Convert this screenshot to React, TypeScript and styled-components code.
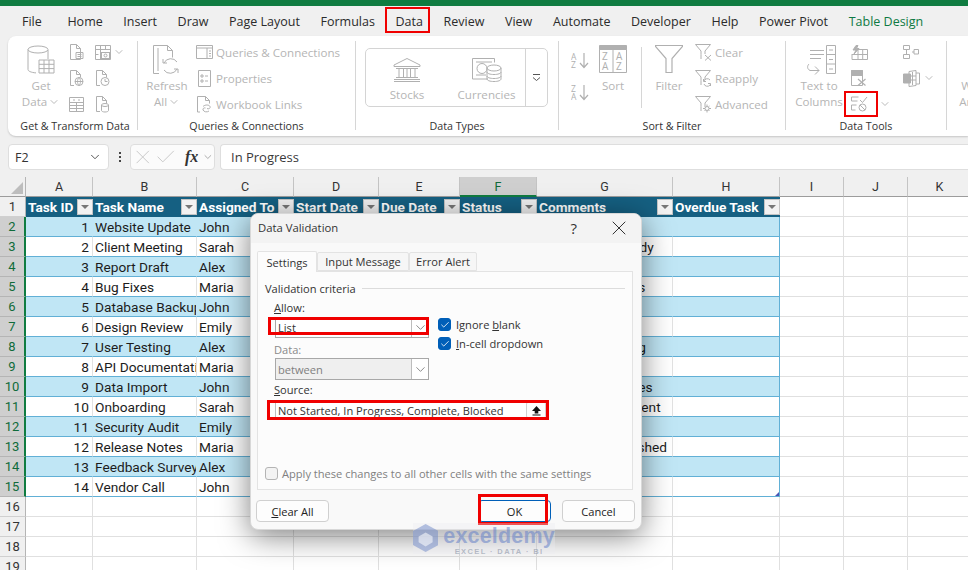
import React from 'react';
import styled, { createGlobalStyle } from 'styled-components';
import { ChevronDown, X, Check } from 'lucide-react';

const GlobalStyle = createGlobalStyle`
  html, body {
    margin: 0;
    padding: 0;
    overflow: hidden;
    background: #f0f0f0;
  }
`;

const uiFont = `"Open Sans", "Noto Sans", sans-serif`;
const cellFont = `Roboto, "Liberation Sans", sans-serif`;

const Page = styled.div`
  position: relative;
  width: 968px;
  height: 570px;
  overflow: hidden;
  display: flex;
  flex-direction: column;
  background: #f0f0f0;
  font-family: ${uiFont};
`;

const TopStrip = styled.div`
  height: 6px;
  flex-shrink: 0;
  background: #107c41;
`;

const TabBar = styled.div`
  height: 30px;
  flex-shrink: 0;
  display: flex;
  align-items: center;
  gap: 20.6px;
  padding-left: 22px;
`;

const Tab = styled.div<{ $accent?: boolean }>`
  position: relative;
  font-size: 12.5px;
  color: ${(p) => (p.$accent ? '#0e7a43' : '#2b2b2b')};
  white-space: nowrap;

  &:first-child {
    margin-right: 5px;
  }
`;

const RedBox = styled.div<{ $t: number; $l: number; $r: number; $b: number; $w?: number }>`
  position: absolute;
  top: ${(p) => p.$t}px;
  left: ${(p) => p.$l}px;
  right: ${(p) => p.$r}px;
  bottom: ${(p) => p.$b}px;
  border: ${(p) => p.$w || 2}px solid #f00000;
  pointer-events: none;
  z-index: 3;
`;

const Ribbon = styled.div`
  height: 100px;
  flex-shrink: 0;
  margin-left: 8px;
  display: flex;
  background: #fff;
  border-radius: 8px 0 0 8px;
  box-shadow: 0 1px 2px rgba(0, 0, 0, 0.18);
  overflow: hidden;
`;

const Group = styled.div<{ $w: number }>`
  width: ${(p) => p.$w}px;
  flex-shrink: 0;
  display: flex;
  flex-direction: column;
`;

const GroupBody = styled.div<{ $pl: number }>`
  height: 82px;
  padding: 3px 0 0 ${(p) => p.$pl}px;
  display: flex;
  box-sizing: border-box;
`;

const GroupLabel = styled.div<{ $pl?: number }>`
  height: 16px;
  padding-left: ${(p) => p.$pl || 0}px;
  line-height: 16px;
  text-align: center;
  font-size: 10.7px;
  color: #333;
  white-space: nowrap;
`;

const GroupSep = styled.div`
  width: 1px;
  flex-shrink: 0;
  margin: 5px 0 6px;
  background: #d6d6d6;
`;

const BigButton = styled.div<{ $w: number; $ml?: number }>`
  width: ${(p) => p.$w}px;
  margin-left: ${(p) => p.$ml || 0}px;
  flex-shrink: 0;
  display: flex;
  flex-direction: column;
  align-items: center;
  font-size: 11.6px;
  line-height: 16px;
  color: #b5b5b5;
  white-space: nowrap;
`;

const IconSpot = styled.div`
  height: 39px;
  box-sizing: border-box;
  padding-top: 6px;
  display: flex;
  align-items: flex-start;
`;

const CaretLine = styled.span`
  display: flex;
  align-items: center;
  gap: 1px;
`;

const Stack = styled.div<{ $ml?: number }>`
  margin-left: ${(p) => p.$ml || 0}px;
  display: flex;
  flex-direction: column;
`;

const Line = styled.div<{ $w?: number }>`
  position: relative;
  height: 26px;
  width: ${(p) => (p.$w ? `${p.$w}px` : 'auto')};
  display: flex;
  align-items: center;
  gap: 3px;
  font-size: 11.6px;
  color: #b5b5b5;
  white-space: nowrap;
`;

const Slot = styled.div`
  width: 17px;
  display: flex;
  justify-content: center;
  flex-shrink: 0;
`;

const Caret = styled(ChevronDown)<{ $ml?: number }>`
  width: 12px;
  height: 12px;
  margin-left: ${(p) => p.$ml || 0}px;
  color: #a8a8a8;
  stroke-width: 1.6;
  flex-shrink: 0;
`;

const IconGrid = styled.div`
  margin-left: 9px;
  display: grid;
  grid-template-columns: 26px 28px;
  grid-auto-rows: 26px;
  align-items: center;
`;

const IconCell = styled.div`
  display: flex;
  align-items: center;
  gap: 2px;
`;

const TypeBox = styled.div`
  margin-top: 9px;
  width: 183px;
  height: 59px;
  box-sizing: border-box;
  border: 1px solid #d4d4d4;
  border-radius: 5px;
  display: flex;
`;

const TypeItem = styled.div<{ $w: number }>`
  width: ${(p) => p.$w}px;
  padding-top: 9px;
  display: flex;
  flex-direction: column;
  align-items: center;
  gap: 5px;
  font-size: 11.6px;
  color: #b5b5b5;
`;

const TypeMore = styled.div`
  flex: 1;
  border-left: 1px solid #d4d4d4;
  display: flex;
  align-items: center;
  justify-content: center;
`;

const SortStack = styled.div`
  margin-left: 12px;
  padding-top: 13px;
  display: flex;
  flex-direction: column;
  gap: 15px;
`;

const InnerSep = styled.div`
  width: 1px;
  height: 61px;
  margin: 8px 0 0 14px;
  background: #d6d6d6;
`;

const FormulaRow = styled.div`
  height: 26px;
  flex-shrink: 0;
  margin-top: 8px;
  display: flex;
  align-items: stretch;
`;

const NameBox = styled.div`
  width: 101px;
  margin-left: 8px;
  box-sizing: border-box;
  padding: 0 6px;
  display: flex;
  align-items: center;
  justify-content: space-between;
  background: #fff;
  border: 1px solid #dedede;
  border-radius: 4px;
  font-size: 12.5px;
  color: #333;
`;

const Dots = styled.div`
  width: 21px;
  display: flex;
  flex-direction: column;
  align-items: center;
  justify-content: center;
  gap: 2px;

  i {
    width: 2px;
    height: 2px;
    background: #444;
  }
`;

const FormulaTools = styled.div`
  width: 85px;
  box-sizing: border-box;
  display: flex;
  align-items: center;
  background: #fbfbfb;
  border: 1px solid #dedede;
  border-radius: 4px;
  color: #c8c8c8;
`;

const FxMark = styled.span`
  margin: 0 4px 0 7px;
  font-family: "Liberation Serif", serif;
  font-style: italic;
  font-weight: 700;
  font-size: 16px;
  color: #333;
`;

const FormulaInput = styled.div`
  flex: 1;
  margin-left: 5px;
  padding-left: 10px;
  display: flex;
  align-items: center;
  background: #fff;
  border: 1px solid #dedede;
  border-right: none;
  border-radius: 4px 0 0 4px;
  font-size: 13px;
  color: #3a3a3a;
`;

const SheetGrid = styled.div`
  margin-top: 7px;
  display: grid;
  grid-template-columns: 26px 67px 104px 97px 85px 81px 77px 136px 107px 64px 64px 64px;
  grid-auto-rows: 20px;
  background: #fff;
`;

const Corner = styled.div`
  background: #f0f0f0;
  border-right: 1px solid #b5b5b5;
  border-bottom: 1px solid #9c9c9c;
  display: flex;
  align-items: flex-end;
  justify-content: flex-end;
  padding: 0 2px 2px 0;
  box-sizing: border-box;

  &::after {
    content: '';
    border-style: solid;
    border-width: 0 0 12px 12px;
    border-color: transparent transparent #bdbdbd transparent;
  }
`;

const ColHead = styled.div<{ $on?: boolean }>`
  box-sizing: border-box;
  display: flex;
  align-items: center;
  justify-content: center;
  background: ${(p) => (p.$on ? '#cfcfcf' : '#f0f0f0')};
  border-right: 1px solid #c4c4c4;
  border-bottom: ${(p) => (p.$on ? '2px solid #107c41' : '1px solid #9c9c9c')};
  font-family: ${cellFont};
  font-size: 12.5px;
  color: ${(p) => (p.$on ? '#0f6b3a' : '#333')};
`;

const RowHead = styled.div<{ $on?: boolean }>`
  box-sizing: border-box;
  display: flex;
  align-items: center;
  justify-content: center;
  background: ${(p) => (p.$on ? '#cfcfcf' : '#f0f0f0')};
  border-right: ${(p) => (p.$on ? '2px solid #107c41' : '1px solid #b5b5b5')};
  border-bottom: 1px solid ${(p) => (p.$on ? '#b5b5b5' : '#d0d0d0')};
  font-family: ${cellFont};
  font-size: 13px;
  color: ${(p) => (p.$on ? '#0f6b3a' : '#333')};
`;

const HeadCell = styled.div`
  position: relative;
  box-sizing: border-box;
  padding-left: 2px;
  display: flex;
  align-items: center;
  background: #156082;
  font-family: ${cellFont};
  font-weight: 700;
  font-size: 13.7px;
  color: #fff;
  white-space: nowrap;
  overflow: hidden;
`;

const FilterButton = styled.div`
  position: absolute;
  right: 0;
  top: 2px;
  width: 16px;
  height: 16px;
  box-sizing: border-box;
  display: flex;
  align-items: center;
  justify-content: center;
  background: #f2f2f2;
  border: 1px solid #c4c4c4;

  &::after {
    content: '';
    border-style: solid;
    border-width: 4px 4px 0 4px;
    border-color: #777 transparent transparent transparent;
  }
`;

const Cell = styled.div<{ $band?: boolean; $num?: boolean; $end?: boolean }>`
  position: relative;
  box-sizing: border-box;
  padding: 0 3px 0 2px;
  line-height: 21px;
  background: ${(p) => (p.$band ? '#c0e6f5' : '#fff')};
  border-bottom: 1px solid #61b0d6;
  border-right: 1px solid ${(p) => (p.$end ? '#61b0d6' : p.$band ? '#c0e6f5' : '#e2e2e2')};
  font-family: ${cellFont};
  font-size: 13.7px;
  color: #1c1c1c;
  text-align: ${(p) => (p.$num ? 'right' : 'left')};
  white-space: nowrap;
  overflow: hidden;
`;

const Blank = styled.div`
  box-sizing: border-box;
  background: #fff;
  border-right: 1px solid #e0e0e0;
  border-bottom: 1px solid #e0e0e0;
`;

const ResizeMark = styled.div`
  position: absolute;
  right: 0;
  bottom: 0;
  border-style: solid;
  border-width: 0 0 4px 4px;
  border-color: transparent transparent #4a55b5 transparent;
`;

const Dialog = styled.div`
  position: absolute;
  left: 250px;
  top: 213px;
  width: 392px;
  height: 317px;
  box-sizing: border-box;
  display: flex;
  flex-direction: column;
  background: #f9f9f9;
  border: 1px solid #d8d8d8;
  border-radius: 8px;
  box-shadow: 0 6px 30px rgba(0, 0, 0, 0.5);
  font-size: 11.1px;
  color: #333;
  z-index: 2;
`;

const DialogTitle = styled.div`
  height: 29px;
  flex-shrink: 0;
  box-sizing: border-box;
  padding: 0 10px 2px 7px;
  display: flex;
  align-items: center;
  background: #f3f3f3;
  border-radius: 8px 8px 0 0;
  font-size: 11.3px;

  b {
    flex: 1;
    font-weight: 400;
  }
`;

const HelpMark = styled.span`
  margin-right: 30px;
  font-size: 15px;
`;

const TabRow = styled.div`
  height: 20px;
  margin: 8px 0 0 6px;
  flex-shrink: 0;
  display: flex;
  align-items: flex-end;
`;

const DialogTab = styled.div<{ $on?: boolean; $w: number }>`
  position: relative;
  width: ${(p) => p.$w}px;
  height: ${(p) => (p.$on ? 21 : 19)}px;
  margin-bottom: ${(p) => (p.$on ? -1 : 0)}px;
  box-sizing: border-box;
  display: flex;
  align-items: center;
  justify-content: center;
  background: ${(p) => (p.$on ? '#fcfcfc' : '#f6f6f6')};
  border: 1px solid #e3e3e3;
  border-bottom: ${(p) => (p.$on ? 'none' : '1px solid #e3e3e3')};
  border-radius: 2px 2px 0 0;
  z-index: ${(p) => (p.$on ? 1 : 0)};
`;

const Panel = styled.div`
  width: 376px;
  height: 219px;
  margin-left: 6px;
  flex-shrink: 0;
  box-sizing: border-box;
  padding: 8px 7px 9px 7px;
  display: flex;
  flex-direction: column;
  background: #fcfcfc;
  border: 1px solid #e3e3e3;
`;

const Legend = styled.div`
  height: 16px;
  flex-shrink: 0;
  display: flex;
  align-items: center;
  gap: 6px;
  white-space: nowrap;

  &::after {
    content: '';
    flex: 1;
    height: 1px;
    background: #dcdcdc;
  }
`;

const CriteriaRow = styled.div`
  margin: 5px 0 0 10px;
  display: flex;
  gap: 9px;
`;

const FieldColumn = styled.div`
  width: 154px;
  display: flex;
  flex-direction: column;
`;

const FieldLabel = styled.div<{ $off?: boolean; $h: number; $pb?: number }>`
  height: ${(p) => p.$h}px;
  margin-left: -1px;
  padding-bottom: ${(p) => p.$pb ?? 2}px;
  box-sizing: border-box;
  display: flex;
  align-items: flex-end;
  color: ${(p) => (p.$off ? '#8a8a8a' : '#333')};

  span {
    white-space: pre;
  }
`;

const SelectBox = styled.div<{ $off?: boolean; $h: number }>`
  position: relative;
  height: ${(p) => p.$h}px;
  box-sizing: border-box;
  display: flex;
  align-items: center;
  padding-left: 2px;
  background: ${(p) => (p.$off ? '#efefef' : '#fff')};
  border: 1px solid #a8a8a8;
  color: ${(p) => (p.$off ? '#808080' : '#333')};
`;

const SelectArrow = styled.div`
  position: absolute;
  right: 0;
  top: 0;
  bottom: 0;
  width: 16px;
  display: flex;
  align-items: center;
  justify-content: center;
  background: #fff;
  border-left: 1px solid #bdbdbd;
  color: #666;
`;

const CheckColumn = styled.div`
  padding-top: 17px;
  display: flex;
  flex-direction: column;
  gap: 6px;
`;

const CheckLine = styled.div<{ $off?: boolean }>`
  height: 13px;
  display: flex;
  align-items: center;
  gap: 4px;
  color: ${(p) => (p.$off ? '#808080' : '#333')};
  white-space: nowrap;
`;

const TickLine = styled(CheckLine)`
  gap: 5px;
`;

const Box = styled.div<{ $on?: boolean }>`
  width: 13px;
  height: 13px;
  box-sizing: border-box;
  display: flex;
  align-items: center;
  justify-content: center;
  flex-shrink: 0;
  background: ${(p) => (p.$on ? '#005fb8' : '#f3f3f3')};
  border: 1px solid ${(p) => (p.$on ? '#005fb8' : '#b4b4b4')};
  border-radius: 3px;
  color: #fff;
`;

const SourceBlock = styled.div`
  margin-left: 10px;
  width: 272px;
  display: flex;
  flex-direction: column;
`;

const SourceInput = styled.div`
  position: relative;
  height: 20px;
  margin-top: 1px;
  padding-left: 2px;
  box-sizing: border-box;
  display: flex;
  align-items: center;
  background: #fff;
  border: 1px solid #bdbdbd;
  white-space: nowrap;
`;

const PickButton = styled.div`
  position: absolute;
  right: 0;
  top: 0;
  bottom: 0;
  width: 20px;
  box-sizing: border-box;
  display: flex;
  align-items: center;
  justify-content: center;
  background: #fdfdfd;
  border: 1px solid #d0d0d0;
  border-radius: 3px;
`;

const ApplyLine = styled(CheckLine)`
  margin-top: auto;
`;

const DialogFoot = styled.div`
  margin-top: 10px;
  padding: 0 6px 0 5px;
  display: flex;
  gap: 11px;
`;

const DlgButton = styled.div<{ $primary?: boolean }>`
  position: relative;
  width: 73px;
  height: 22px;
  box-sizing: border-box;
  display: flex;
  align-items: center;
  justify-content: center;
  background: #fdfdfd;
  border: 1px solid ${(p) => (p.$primary ? '#005fb8' : '#d0d0d0')};
  border-radius: 4px;
  color: #222;
`;

const Spacer = styled.div`
  flex: 1;
`;

const Watermark = styled.div`
  position: absolute;
  left: 413px;
  top: 523px;
  width: 142px;
  height: 31px;
  display: flex;
  align-items: flex-start;
  gap: 5px;
  background: rgba(235, 235, 240, 0.35);
  z-index: 4;
`;

const MarkWords = styled.div`
  padding-top: 3px;
  display: flex;
  flex-direction: column;
  align-items: center;
  line-height: 1;
  font-family: "Liberation Sans", sans-serif;
  color: rgba(100, 128, 200, 0.55);

  strong {
    font-size: 21.5px;
    letter-spacing: 0.2px;
  }

  small {
    font-size: 7.5px;
    font-weight: 700;
    letter-spacing: 1.4px;
    color: rgba(130, 140, 160, 0.55);
  }
`;

const GrayIcon = styled.svg`
  display: block;
  flex-shrink: 0;
  fill: none;
  stroke: #b0b0b0;
  stroke-width: 1;
`;

const GetDataIcon = () => (
  <GrayIcon width="28" height="31" viewBox="0 0 28 31">
    <ellipse cx="11" cy="4.5" rx="10" ry="3.5" />
    <path d="M1 4.5v20c0 1.6 3 3 8 3.4M21 5v9" />
    <path d="M12 15h15v13H12zM12 19.3h15M12 23.6h15M17 15v13M22 15v13" />
  </GrayIcon>
);

const DocIcon = () => (
  <GrayIcon width="15" height="17" viewBox="0 0 15 17">
    <path d="M1.5.5h6l4 4v11h-10zM7.500.5v4h4" />
    <path d="M7 8.500h7v6H7zM8.500 10.500h4M8.500 12.500h4" />
  </GrayIcon>
);

const CamTableIcon = () => (
  <GrayIcon width="16" height="15" viewBox="0 0 16 15">
    <path d="M.5.5h15v14H.5zM.5 4.500h15M5.500.5v14M10.500.5v4M.5 9.500h3" />
    <rect x="6.500" y="7.500" width="8" height="6" />
    <circle cx="10.500" cy="10.500" r="1.500" />
  </GrayIcon>
);

const DocGlobeIcon = () => (
  <GrayIcon width="15" height="17" viewBox="0 0 15 17">
    <path d="M5 15.500H1.500V.5h6l4 4v3M7.500.5v4h4" />
    <circle cx="10" cy="11.500" r="4" />
    <path d="M6 11.500h8M10 7.500c-2 2.500-2 5.500 0 8M10 7.500c2 2.500 2 5.500 0 8" />
  </GrayIcon>
);

const DocClockIcon = () => (
  <GrayIcon width="15" height="17" viewBox="0 0 15 17">
    <path d="M5 15.500H1.500V.5h6l4 4v3M7.500.5v4h4" />
    <circle cx="10" cy="11.500" r="4" />
    <path d="M10 9v2.500h2.500" />
  </GrayIcon>
);

const SheetIcon = () => (
  <GrayIcon width="15" height="15" viewBox="0 0 15 15">
    <path d="M.5.5h14v14H.5zM.5 5.500h14M.5 8.500h14M.5 11.500h14M7.500 5.500v9M4 3h2M9 3h2" />
  </GrayIcon>
);

const DocDbIcon = () => (
  <GrayIcon width="15" height="17" viewBox="0 0 15 17">
    <path d="M5 15.500H1.500V.5h6l4 4v3M7.500.5v4h4" />
    <ellipse cx="10" cy="9" rx="3.500" ry="1.500" />
    <path d="M6.500 9v5.500c0 .8 1.500 1.500 3.500 1.500s3.500-.7 3.500-1.500V9" />
  </GrayIcon>
);

const RefreshIcon = () => (
  <GrayIcon width="29" height="31" viewBox="0 0 29 31">
    <path d="M6 28.500H.5V.5h14l5 5v7M14.500.5v5h5" />
    <path d="M5 3v23" />
    <path d="M24 17a7.500 7.500 0 0 0-13 1M11 25a7.500 7.500 0 0 0 13-1M10 14v4h4M25 28v-4h-4" />
  </GrayIcon>
);

const QueriesIcon = () => (
  <GrayIcon width="17" height="14" viewBox="0 0 17 14">
    <path d="M.5.5h16v13H.5zM.5 3h16M11 3v10.500M13 6h2M13 8.500h2M13 11h2" />
  </GrayIcon>
);

const PropsIcon = () => (
  <GrayIcon width="13" height="17" viewBox="0 0 13 17">
    <path d="M.5.5h12v16H.5zM3 5h2v2H3zM7 6h3M3 10h2v2H3zM7 11h3" />
  </GrayIcon>
);

const LinksIcon = () => (
  <GrayIcon width="15" height="17" viewBox="0 0 15 17">
    <path d="M3 16H.5V.5h8l4 4v3M8.500.5v4h4" />
    <path d="M6 10.500c2-2 6-2 7 0 .8 1.800-1.500 3-3 2M12 15c-2 1.500-5 1-6-1-.5-1.500 1-2.500 2.500-2" />
  </GrayIcon>
);

const BankIcon = () => (
  <GrayIcon width="28" height="24" viewBox="0 0 28 24">
    <path d="M14 .5L27 7v1.500H1V7zM3 10.500h22M3 19.500h22M1 23.500h26M1 21.500h26M6 10.500v9M10.500 10.500v9M14 10.500v9M17.500 10.500v9M22 10.500v9" />
  </GrayIcon>
);

const CurrencyIcon = () => (
  <GrayIcon width="30" height="24" viewBox="0 0 30 24">
    <path d="M16 21H.5V.5h22v4M4 4h16M4 17h10" />
    <circle cx="10" cy="10.500" r="5" />
    <ellipse cx="22" cy="10" rx="7" ry="3" />
    <path d="M15 10v11c0 1.500 3 2.500 7 2.500s7-1 7-2.500V10M15 14c0 1.500 3 2.500 7 2.500s7-1 7-2.500M15 18c0 1.500 3 2.500 7 2.500s7-1 7-2.500" />
  </GrayIcon>
);

const MoreIcon = () => (
  <svg width="9" height="9" viewBox="0 0 9 9" fill="none" stroke="#555" strokeWidth="1">
    <path d="M1 1.500h7M1 4.500l3.500 3 3.500-3" />
  </svg>
);

const AzIcon = ({ up }: { up?: boolean }) => (
  <GrayIcon width="18" height="17" viewBox="0 0 18 17">
    <text x="0" y="7.500" fontSize="8.500" fontFamily="Open Sans, sans-serif" fill="#b0b0b0" stroke="none">{up ? 'A' : 'Z'}</text>
    <text x="0" y="16" fontSize="8.500" fontFamily="Open Sans, sans-serif" fill="#b0b0b0" stroke="none">{up ? 'Z' : 'A'}</text>
    <path d="M13 1v14M9 11l4 4.500 4-4.500" strokeWidth="1.200" />
  </GrayIcon>
);

const SortIcon = () => (
  <GrayIcon width="28" height="28" viewBox="0 0 28 28">
    <path d="M.5 4.500h27v23H.5zM14 4.500v23" />
    <path d="M.5.5h27v4H.5z" fill="#b0b0b0" />
    <text x="3" y="15" fontSize="10" fontFamily="Open Sans, sans-serif" fill="#b0b0b0" stroke="none">Z</text>
    <text x="3" y="25" fontSize="10" fontFamily="Open Sans, sans-serif" fill="#b0b0b0" stroke="none">A</text>
    <text x="17" y="15" fontSize="10" fontFamily="Open Sans, sans-serif" fill="#b0b0b0" stroke="none">A</text>
    <text x="17" y="25" fontSize="10" fontFamily="Open Sans, sans-serif" fill="#b0b0b0" stroke="none">Z</text>
  </GrayIcon>
);

const FunnelIcon = () => (
  <GrayIcon width="28" height="28" viewBox="0 0 28 28">
    <path d="M.5.500h27v1L17 13.500v14h-6v-14L.5 1.500z" strokeWidth="1.200" />
  </GrayIcon>
);

const MiniFunnel = ({ kind }: { kind: 'clear' | 'reapply' | 'advanced' }) => (
  <GrayIcon width="17" height="17" viewBox="0 0 17 17">
    <path d="M.5.500h15L10 7v3M6 10.500V7L.5.500M6 10.500V15" />
    {kind === 'clear' && <path d="M10 11l6 5.500M16 11l-6 5.500" />}
    {kind === 'reapply' && <path d="M15 10a3.500 3.500 0 0 0-6 1M9 14a3.500 3.500 0 0 0 6 1M8.500 9v2.500H11M15.500 16v-2.500H13" />}
    {kind === 'advanced' && <><circle cx="12" cy="12.500" r="2" /><path d="M12 8.500v2M12 14.500v2M8 12.500h2M14 12.500h2M9.500 10l1.200 1.200M14.500 10l-1.200 1.200M9.500 15l1.200-1.200M14.500 15l-1.200-1.200" /></>}
  </GrayIcon>
);

const TextColsIcon = () => (
  <GrayIcon width="33" height="31" viewBox="0 0 33 31">
    <path d="M7 5.500h14M7 9.500h14M7 13.500h11" />
    <path d="M6 19c-2 2-2 5 1 6.500h9M12 21.500l4 4-4 4" />
    <path d="M23.500.5h9v28h-9zM23.500 9.500h9M23.500 19h9M26 5h4M26 14.500h4M26 24h4" />
  </GrayIcon>
);

const FlashIcon = () => (
  <GrayIcon width="17" height="15" viewBox="0 0 17 15">
    <path d="M5 4.500h11.500v10H1V9M1 9.500h15.500M7 4.500v10M11.700 4.500v10" />
    <path d="M5 .5L2 5h3L3 9l5-5.500H5.500L7 .5z" fill="#b0b0b0" />
  </GrayIcon>
);

const DupesIcon = () => (
  <GrayIcon width="16" height="16" viewBox="0 0 16 16">
    <path d="M.5.5h11v15H.5z" />
    <path d="M.5.5h11v5H.5z" fill="#b0b0b0" />
    <path d="M7 9l7.500 6.500M14.500 9L7 15.500" strokeWidth="1.200" />
  </GrayIcon>
);

const ValidationIcon = () => (
  <GrayIcon width="17" height="16" viewBox="0 0 17 16">
    <path d="M.5 1h7M.5 1v4h6M.5 9v5h4M.5 9h5" />
    <path d="M9 4l2.500 2.500L16 1" />
    <circle cx="11.500" cy="11.500" r="3.500" />
    <path d="M9 9l5 5" />
  </GrayIcon>
);

const ConsolidateIcon = () => (
  <GrayIcon width="16" height="14" viewBox="0 0 16 14">
    <path d="M.5.5h6v4h-6zM.5 9.500h6v4h-6zM3.500 4.500v5M9 7h2M11 4.500h4.500v4.500H11z" />
  </GrayIcon>
);

const RelationIcon = () => (
  <GrayIcon width="17" height="17" viewBox="0 0 17 17">
    <path d="M6 1.500L13 .5v15l-7 1zM13 3h3.500v11H13M6 6h7M6 10h7M9.500 2v13" />
    <path d="M.5 4h7v9h-7z" fill="#b0b0b0" />
  </GrayIcon>
);

const LogoIcon = () => (
  <svg width="27" height="30" viewBox="0 0 27 30">
    <path d="M13.500 0L27 7.500v15L13.500 30 0 22.500v-15z" fill="rgba(110,135,200,0.5)" />
    <path d="M13.500 9l7.500 4.500v6L13.500 24 6 19.500v-6z" fill="rgba(255,255,255,0.55)" />
  </svg>
);

const tabs = ['File', 'Home', 'Insert', 'Draw', 'Page Layout', 'Formulas', 'Data', 'Review', 'View', 'Automate', 'Developer', 'Help', 'Power Pivot'];
const columns = ['A', 'B', 'C', 'D', 'E', 'F', 'G', 'H', 'I', 'J', 'K'];
const headers = ['Task ID', 'Task Name', 'Assigned To', 'Start Date', 'Due Date', 'Status', 'Comments', 'Overdue Task'];

const tasks = [
  { id: 1, name: 'Website Update', who: 'John', start: '1-Jun', due: '10-Jun', status: 'In Progress', note: '' },
  { id: 2, name: 'Client Meeting', who: 'Sarah', start: '2-Jun', due: '3-Jun', status: 'Complete', note: 'Agenda is all ready' },
  { id: 3, name: 'Report Draft', who: 'Alex', start: '3-Jun', due: '12-Jun', status: 'Not Started', note: '' },
  { id: 4, name: 'Bug Fixes', who: 'Maria', start: '4-Jun', due: '9-Jun', status: 'In Progress', note: 'Critical UX issues' },
  { id: 5, name: 'Database Backup', who: 'John', start: '5-Jun', due: '6-Jun', status: 'Complete', note: '' },
  { id: 6, name: 'Design Review', who: 'Emily', start: '6-Jun', due: '14-Jun', status: 'Blocked', note: '' },
  { id: 7, name: 'User Testing', who: 'Alex', start: '7-Jun', due: '15-Jun', status: 'In Progress', note: 'Group still testing' },
  { id: 8, name: 'API Documentation', who: 'Maria', start: '8-Jun', due: '18-Jun', status: 'Not Started', note: '' },
  { id: 9, name: 'Data Import', who: 'John', start: '9-Jun', due: '11-Jun', status: 'Complete', note: 'Checks all the files' },
  { id: 10, name: 'Onboarding', who: 'Sarah', start: '10-Jun', due: '20-Jun', status: 'In Progress', note: 'New hire equipment' },
  { id: 11, name: 'Security Audit', who: 'Emily', start: '11-Jun', due: '21-Jun', status: 'Blocked', note: '' },
  { id: 12, name: 'Release Notes', who: 'Maria', start: '12-Jun', due: '13-Jun', status: 'Complete', note: 'Notes now published' },
  { id: 13, name: 'Feedback Survey', who: 'Alex', start: '13-Jun', due: '22-Jun', status: 'Not Started', note: '' },
  { id: 14, name: 'Vendor Call', who: 'John', start: '14-Jun', due: '15-Jun', status: 'Complete', note: '' },
];

function TaskRow({ task, row }: { task: (typeof tasks)[number]; row: number }) {
  const band = row % 2 === 0;
  const values = [task.name, task.who, task.start, task.due, task.status, task.note];
  return (
    <>
      <RowHead $on>{row}</RowHead>
      <Cell $band={band} $num>{task.id}</Cell>
      {values.map((v, i) => (
        <Cell key={i} $band={band}>{v}</Cell>
      ))}
      <Cell $band={band} $end>
        {row === 15 && <ResizeMark />}
      </Cell>
      <Blank />
      <Blank />
      <Blank />
    </>
  );
}

function EmptyRow({ row }: { row: number }) {
  return (
    <>
      <RowHead>{row}</RowHead>
      {columns.map((c) => (
        <Blank key={c} />
      ))}
    </>
  );
}

function RibbonBar() {
  return (
    <Ribbon>
      <Group $w={129}>
        <GroupBody $pl={14}>
          <BigButton $w={38}>
            <IconSpot><GetDataIcon /></IconSpot>
            <span>Get</span>
            <CaretLine>Data <Caret /></CaretLine>
          </BigButton>
          <IconGrid>
            <IconCell><DocIcon /></IconCell>
            <IconCell><CamTableIcon /><Caret /></IconCell>
            <IconCell><DocGlobeIcon /></IconCell>
            <IconCell><DocClockIcon /></IconCell>
            <IconCell><SheetIcon /></IconCell>
            <IconCell><DocDbIcon /></IconCell>
          </IconGrid>
        </GroupBody>
        <GroupLabel $pl={5}>Get &amp; Transform Data</GroupLabel>
      </Group>
      <GroupSep />
      <Group $w={217}>
        <GroupBody $pl={9}>
          <BigButton $w={40}>
            <IconSpot><RefreshIcon /></IconSpot>
            <span>Refresh</span>
            <CaretLine>All <Caret /></CaretLine>
          </BigButton>
          <Stack $ml={9}>
            <Line><Slot><QueriesIcon /></Slot>Queries &amp; Connections</Line>
            <Line><Slot><PropsIcon /></Slot>Properties</Line>
            <Line><Slot><LinksIcon /></Slot>Workbook Links</Line>
          </Stack>
        </GroupBody>
        <GroupLabel>Queries &amp; Connections</GroupLabel>
      </Group>
      <GroupSep />
      <Group $w={202}>
        <GroupBody $pl={9}>
          <TypeBox>
            <TypeItem $w={82}><BankIcon />Stocks</TypeItem>
            <TypeItem $w={77}><CurrencyIcon />Currencies</TypeItem>
            <TypeMore><MoreIcon /></TypeMore>
          </TypeBox>
        </GroupBody>
        <GroupLabel>Data Types</GroupLabel>
      </Group>
      <GroupSep />
      <Group $w={226}>
        <GroupBody $pl={0}>
          <SortStack>
            <AzIcon up />
            <AzIcon />
          </SortStack>
          <BigButton $w={28} $ml={10}>
            <IconSpot><SortIcon /></IconSpot>
            <span>Sort</span>
          </BigButton>
          <InnerSep />
          <BigButton $w={28} $ml={13}>
            <IconSpot><FunnelIcon /></IconSpot>
            <span>Filter</span>
          </BigButton>
          <Stack $ml={12}>
            <Line><MiniFunnel kind="clear" />Clear</Line>
            <Line><MiniFunnel kind="reapply" />Reapply</Line>
            <Line><MiniFunnel kind="advanced" />Advanced</Line>
          </Stack>
        </GroupBody>
        <GroupLabel>Sort &amp; Filter</GroupLabel>
      </Group>
      <GroupSep />
      <Group $w={160}>
        <GroupBody $pl={8}>
          <BigButton $w={50}>
            <IconSpot><TextColsIcon /></IconSpot>
            <span>Text to</span>
            <span>Columns</span>
          </BigButton>
          <Stack $ml={7}>
            <Line $w={34}><FlashIcon /></Line>
            <Line $w={34}><DupesIcon /></Line>
            <Line $w={34}>
              <ValidationIcon />
              <Caret $ml={8} />
              <RedBox $t={0} $l={-7} $r={7} $b={0} />
            </Line>
          </Stack>
          <Stack $ml={18}>
            <Line><ConsolidateIcon /></Line>
            <Line><RelationIcon /><Caret /></Line>
          </Stack>
        </GroupBody>
        <GroupLabel>Data Tools</GroupLabel>
      </Group>
      <GroupSep />
      <Group $w={60}>
        <GroupBody $pl={9}>
          <BigButton $w={50}>
            <IconSpot />
            <span>What-If</span>
            <span>Analysis</span>
          </BigButton>
        </GroupBody>
      </Group>
    </Ribbon>
  );
}

function ValidationDialog() {
  return (
    <Dialog>
      <DialogTitle>
        <b>Data Validation</b>
        <HelpMark>?</HelpMark>
        <X size={24} strokeWidth={1} />
      </DialogTitle>
      <TabRow>
        <DialogTab $on $w={60}>Settings</DialogTab>
        <DialogTab $w={92}>Input Message</DialogTab>
        <DialogTab $w={68}>Error Alert</DialogTab>
      </TabRow>
      <Panel>
        <Legend>Validation criteria</Legend>
        <CriteriaRow>
          <FieldColumn>
            <FieldLabel $h={16}><span><u>A</u>llow:</span></FieldLabel>
            <SelectBox $h={21}>
              List
              <SelectArrow><ChevronDown size={15} strokeWidth={1.2} /></SelectArrow>
              <RedBox $t={-1} $l={-8} $r={-1} $b={2} $w={3} />
            </SelectBox>
            <FieldLabel $off $h={20} $pb={1}>Data:</FieldLabel>
            <SelectBox $off $h={22}>
              between
              <SelectArrow><ChevronDown size={15} strokeWidth={1.2} /></SelectArrow>
            </SelectBox>
          </FieldColumn>
          <CheckColumn>
            <TickLine>
              <Box $on><Check size={10} strokeWidth={2} /></Box>
              <span>Ignore <u>b</u>lank</span>
            </TickLine>
            <TickLine>
              <Box $on><Check size={10} strokeWidth={2} /></Box>
              <span><u>I</u>n-cell dropdown</span>
            </TickLine>
          </CheckColumn>
        </CriteriaRow>
        <SourceBlock>
          <FieldLabel $h={19}><span><u>S</u>ource:</span></FieldLabel>
          <SourceInput>
            Not Started, In Progress, Complete, Blocked
            <PickButton>
              <svg width="11" height="11" viewBox="0 0 11 11" fill="#111">
                <path d="M5.500 1L10 6H7.300v2.500H3.700V6H1zM1.500 9.500h8v1h-8z" />
              </svg>
            </PickButton>
            <RedBox $t={-1} $l={-9} $r={-3} $b={-1} $w={3} />
          </SourceInput>
        </SourceBlock>
        <ApplyLine $off>
          <Box />
          <span>Apply these changes to all other cells with the same settings</span>
        </ApplyLine>
      </Panel>
      <DialogFoot>
        <DlgButton><span><u>C</u>lear All</span></DlgButton>
        <Spacer />
        <DlgButton $primary>
          OK
          <RedBox $t={-7} $l={-1} $r={2} $b={-4} $w={3} />
        </DlgButton>
        <DlgButton>Cancel</DlgButton>
      </DialogFoot>
    </Dialog>
  );
}

export default function App() {
  return (
    <Page>
      <GlobalStyle />
      <TopStrip />
      <TabBar>
        {tabs.map((t) => (
          <Tab key={t}>
            {t}
            {t === 'Data' && <RedBox $t={-6} $l={-11} $r={-7} $b={-3} />}
          </Tab>
        ))}
        <Tab $accent>Table Design</Tab>
      </TabBar>
      <RibbonBar />
      <FormulaRow>
        <NameBox>F2<ChevronDown size={14} strokeWidth={1.4} /></NameBox>
        <Dots><i /><i /><i /></Dots>
        <FormulaTools>
          <X size={24} strokeWidth={1} />
          <Check size={24} strokeWidth={1} />
          <FxMark>fx</FxMark>
          <ChevronDown size={12} strokeWidth={1.4} color="#888" />
        </FormulaTools>
        <FormulaInput>In Progress</FormulaInput>
      </FormulaRow>
      <SheetGrid>
        <Corner />
        {columns.map((c) => (
          <ColHead key={c} $on={c === 'F'}>{c}</ColHead>
        ))}
        <RowHead>1</RowHead>
        {headers.map((h) => (
          <HeadCell key={h}>
            {h}
            <FilterButton />
          </HeadCell>
        ))}
        <Blank />
        <Blank />
        <Blank />
        {tasks.map((t, i) => (
          <TaskRow key={t.id} task={t} row={i + 2} />
        ))}
        {[16, 17, 18, 19].map((r) => (
          <EmptyRow key={r} row={r} />
        ))}
      </SheetGrid>
      <ValidationDialog />
      <Watermark>
        <LogoIcon />
        <MarkWords>
          <strong>exceldemy</strong>
          <small>EXCEL · DATA · BI</small>
        </MarkWords>
      </Watermark>
    </Page>
  );
}
